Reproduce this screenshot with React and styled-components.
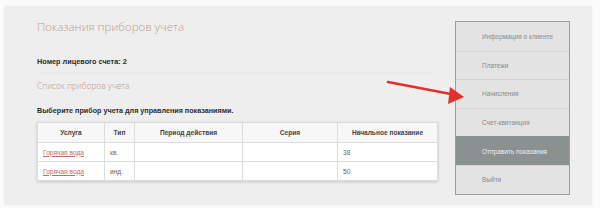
import React from "react";
import styled, { createGlobalStyle } from "styled-components";

const Global = createGlobalStyle`
  html, body {
    margin: 0;
    padding: 0;
    background: #fbfbfb;
  }
  body {
    font-family: "Liberation Sans", Arial, sans-serif;
  }
`;

const rows = [
  { service: "Горячая вода", type: "кв.", period: "", serial: "", start: "38" },
  { service: "Горячая вода", type: "инд.", period: "", serial: "", start: "50" },
];

const menu = [
  "Информация о клиенте",
  "Платежи",
  "Начисления",
  "Счет-квитанция",
  "Отправить показания",
  "Выйти",
];

function App() {
  return (
    <Page>
      <Global />
      <Panel>
        <Main>
          <Title>Показания приборов учета</Title>
          <Account>Номер лицевого счета: 2</Account>
          <Divider />
          <Subtitle>Список приборов учета</Subtitle>
          <Hint>Выберите прибор учета для управления показаниями.</Hint>
          <Table>
            <thead>
              <tr>
                <Th $w={66}>Услуга</Th>
                <Th $w={29}>Тип</Th>
                <Th $w={107}>Период действия</Th>
                <Th $w={94}>Серия</Th>
                <Th>Начальное показание</Th>
              </tr>
            </thead>
            <tbody>
              {rows.map((r, i) => (
                <tr key={i}>
                  <Td>
                    <ServiceLink href="#">{r.service}</ServiceLink>
                  </Td>
                  <Td>{r.type}</Td>
                  <Td>{r.period}</Td>
                  <Td>{r.serial}</Td>
                  <Td>{r.start}</Td>
                </tr>
              ))}
            </tbody>
          </Table>
        </Main>
        <Sidebar>
          <Menu>
            {menu.map((m) => (
              <MenuItem key={m} $active={m === "Отправить показания"}>
                {m}
              </MenuItem>
            ))}
          </Menu>
        </Sidebar>
        <Arrow width="90" height="30" viewBox="0 0 90 30">
          <path d="M2 4 L70 17" stroke="#e2312b" strokeWidth="2.6" strokeLinecap="round" />
          <path d="M64 9 L78 19 L62 26 Z" fill="#e2312b" />
        </Arrow>
      </Panel>
    </Page>
  );
}

export default App;

const Page = styled.div`
  width: 600px;
  height: 208px;
  box-sizing: border-box;
  padding: 6px 8px 3px 4px;
  display: flex;
`;

const Panel = styled.div`
  position: relative;
  flex: 1;
  display: flex;
  background: #eeeeee;
  box-shadow: 0 0 2px rgba(0, 0, 0, 0.06);
`;

const Main = styled.div`
  flex: 1;
  padding: 14px 0 0 33px;
  display: flex;
  flex-direction: column;
  align-items: flex-start;
`;

const Title = styled.div`
  font-family: "Open Sans", sans-serif;
  font-weight: 300;
  font-size: 11.5px;
  line-height: 14px;
  color: #bf9a94;
`;

const Account = styled.div`
  margin-top: 23px;
  font-size: 7.3px;
  line-height: 10px;
  font-weight: bold;
  color: #2c2c2c;
`;

const Divider = styled.div`
  margin-top: 5px;
  width: 400px;
  height: 1px;
  background: #e8e8e8;
  opacity: 0.7;
`;

const Subtitle = styled.div`
  margin-top: 7px;
  font-family: "Open Sans", sans-serif;
  font-weight: 300;
  font-size: 8.3px;
  line-height: 12px;
  color: #bf958e;
`;

const Hint = styled.div`
  margin-top: 14px;
  font-size: 7.2px;
  line-height: 10px;
  font-weight: bold;
  color: #2c2c2c;
`;

const Table = styled.table`
  margin-top: 6px;
  width: 401px;
  border-collapse: collapse;
  background: #fff;
  box-shadow: 0 1px 3px rgba(0, 0, 0, 0.18);
  font-size: 6.6px;
  color: #555;
  table-layout: fixed;
`;

const Th = styled.th`
  width: ${(p) => (p.$w ? `${p.$w}px` : "auto")};
  height: 19px;
  padding: 0;
  background: #f7f7f7;
  border: 1px solid #dcdcdc;
  font-weight: bold;
  color: #444;
  text-align: center;
`;

const Td = styled.td`
  height: 18px;
  padding: 0 0 0 5px;
  border: 1px solid #dcdcdc;
  text-align: left;
  color: #666;
`;

const ServiceLink = styled.a`
  color: #b5735f;
  text-decoration: underline;
`;

const Sidebar = styled.div`
  padding: 15px 22px 0 0;
`;

const Menu = styled.div`
  width: 113px;
  border: 1px solid #9c9c9c;
  display: flex;
  flex-direction: column;
`;

const MenuItem = styled.div`
  height: 28.6px;
  display: flex;
  align-items: center;
  padding-left: 26px;
  font-size: 6.5px;
  color: ${(p) => (p.$active ? "#eef0f0" : "#8a8a8a")};
  background: ${(p) => (p.$active ? "#8b9191" : "#e3e3e3")};
  border-top: 1px solid ${(p) => (p.$active ? "#8b9191" : "#d2d2d2")};
  box-sizing: border-box;
  &:first-child {
    border-top: none;
  }
`;

const Arrow = styled.svg`
  position: absolute;
  left: 382px;
  top: 72px;
`;
